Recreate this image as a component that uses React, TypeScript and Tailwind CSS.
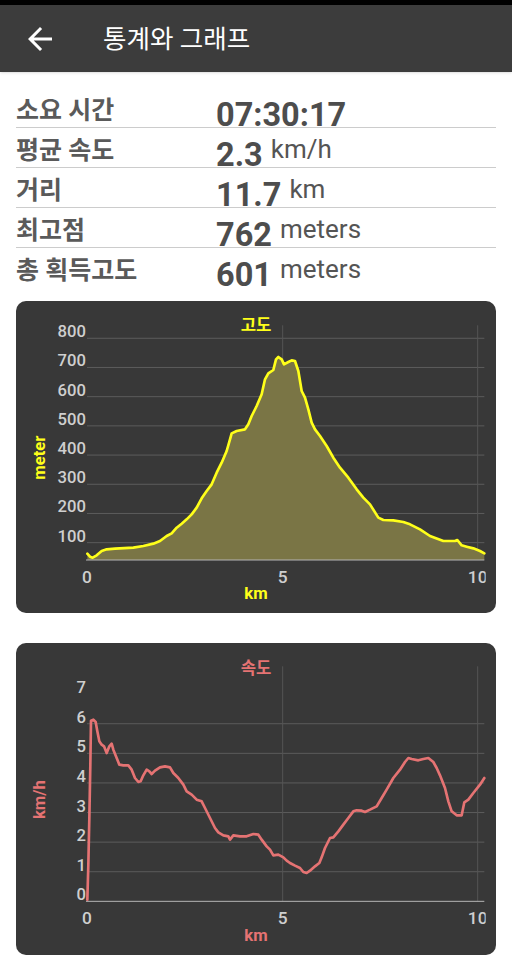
import React from 'react';

type Pt = [number, number];

type Stat = {
    label: string;
    value: string;
    unit?: string;
};

type Tick = {
    label: string;
    y: number;
    grid: boolean;
};

type ChartCfg = {
    id: string;
    title: string;
    yTitle: string;
    color: string;
    fill?: string;
    top: number;
    titleY: number;
    axisY: number;
    gridTop: number;
    xLabelY: number;
    kmY: number;
    yTitleY: number;
    ticks: Tick[];
    points: Pt[];
};

const stats: Stat[] = [
    { label: '소요 시간', value: '07:30:17' },
    { label: '평균 속도', value: '2.3', unit: 'km/h' },
    { label: '거리', value: '11.7', unit: 'km' },
    { label: '최고점', value: '762', unit: 'meters' },
    { label: '총 획득고도', value: '601', unit: 'meters' },
];

// chart coords are 1/3 px (viewBox is 3x the card size)
const elevation: Pt[] = [
    [262, 773], [270, 782], [278, 785], [290, 778], [305, 765], [320, 760], [345, 758], [400, 755],
    [430, 750], [460, 743], [480, 735], [500, 720], [515, 712], [530, 695], [545, 683], [560, 670],
    [575, 655], [590, 635], [605, 607], [620, 585], [635, 565], [650, 530], [665, 500], [680, 465],
    [690, 430], [695, 412], [710, 405], [735, 400], [745, 385], [755, 360], [770, 330], [785, 295],
    [795, 250], [805, 232], [820, 222], [828, 190], [835, 183], [845, 190], [852, 205], [865, 198],
    [875, 193], [885, 195], [895, 225], [905, 285], [915, 305], [925, 340], [935, 380], [945, 400],
    [960, 420], [980, 450], [1000, 485], [1020, 515], [1045, 545], [1070, 580], [1090, 605], [1110, 625],
    [1135, 665], [1150, 672], [1180, 673], [1210, 678], [1230, 685], [1260, 700], [1290, 720], [1330, 735],
    [1365, 735], [1372, 732], [1385, 748], [1400, 752], [1420, 757], [1440, 765], [1453, 772],
];

const speed: Pt[] = [
    [262, 805], [265, 700], [268, 560], [271, 400], [273, 268], [280, 265], [287, 272], [292, 300],
    [298, 330], [305, 340], [312, 345], [320, 365], [328, 345], [335, 337], [340, 355], [350, 380],
    [358, 400], [370, 402], [385, 402], [395, 415], [405, 440], [415, 452], [422, 450], [430, 432],
    [440, 415], [448, 420], [455, 428], [465, 418], [480, 408], [495, 405], [510, 408], [520, 425],
    [535, 440], [550, 460], [560, 480], [575, 490], [590, 505], [605, 510], [615, 530], [630, 560],
    [645, 590], [655, 603], [670, 612], [685, 615], [690, 625], [700, 612], [720, 615], [740, 615],
    [760, 608], [775, 610], [785, 625], [800, 645], [810, 655], [820, 672], [835, 670], [850, 678],
    [860, 688], [870, 695], [885, 703], [900, 710], [910, 722], [920, 725], [930, 718], [945, 705],
    [958, 695], [965, 678], [975, 650], [990, 620], [1000, 618], [1015, 600], [1030, 580], [1045, 560],
    [1060, 540], [1070, 537], [1085, 538], [1095, 542], [1110, 535], [1130, 525], [1145, 500], [1160, 475],
    [1180, 440], [1200, 415], [1215, 392], [1225, 380], [1235, 383], [1255, 387], [1270, 383], [1285, 380],
    [1300, 392], [1310, 410], [1320, 432], [1335, 470], [1345, 510], [1355, 540], [1370, 552], [1385, 552],
    [1393, 513], [1405, 505], [1420, 485], [1440, 460], [1453, 440],
];

const charts: ChartCfg[] = [
    {
        id: 'alt',
        title: '고도',
        yTitle: 'meter',
        color: '#ffff1a',
        fill: '#7a7545',
        top: 15,
        titleY: 105,
        axisY: 792,
        gridTop: 88,
        xLabelY: 862,
        kmY: 910,
        yTitleY: 485,
        ticks: ['100', '200', '300', '400', '500', '600', '700', '800'].map((label, i) => ({
            label,
            y: 740 - i * 87.6,
            grid: true,
        })),
        points: elevation,
    },
    {
        id: 'spd',
        title: '속도',
        yTitle: 'km/h',
        color: '#e57373',
        top: 35,
        titleY: 127,
        axisY: 810,
        gridTop: 105,
        xLabelY: 878,
        kmY: 930,
        yTitleY: 505,
        ticks: ['0', '1', '2', '3', '4', '5', '6', '7'].map((label, i) => ({
            label,
            y: 810 - i * 88.8,
            grid: i > 0 && i < 7,
        })),
        points: speed,
    },
];

const toPath = (pts: Pt[]) => pts.map(([x, y], i) => `${i ? 'L' : 'M'}${x} ${y}`).join(' ');

function Chart({ cfg }: { cfg: ChartCfg }) {
    const line = toPath(cfg.points);
    const last = cfg.points[cfg.points.length - 1];

    return (
        <div className="mx-4 h-[312px] rounded-[10px] bg-[#383838] overflow-hidden">
            <svg className="w-full h-full" viewBox={`48 ${cfg.top} 1440 936`}>
                <defs>
                    <clipPath id={`${cfg.id}-clip`}>
                        <rect x="0" y="0" width="1457" height="1000" />
                    </clipPath>
                </defs>

                {/* grid */}
                {cfg.ticks.filter(t => t.grid).map(t => (
                    <line key={t.label} x1="261" x2="1453" y1={t.y} y2={t.y} stroke="#5c5c5c" strokeWidth="3" />
                ))}
                {[848, 1433].map(x => (
                    <line key={x} x1={x} x2={x} y1={cfg.gridTop} y2={cfg.axisY} stroke="#555555" strokeWidth="3" />
                ))}

                {cfg.fill && (
                    <path d={`${line} L${last[0]} ${cfg.axisY} L262 ${cfg.axisY} Z`} fill={cfg.fill} />
                )}

                <line x1="258" x2="1453" y1={cfg.axisY} y2={cfg.axisY} stroke="#b5b5b5" strokeWidth="3" />

                <path d={line} fill="none" stroke={cfg.color} strokeWidth="8" strokeLinejoin="round" strokeLinecap="round" />

                {/* y labels */}
                {cfg.ticks.map(t => (
                    <text key={t.label} x="258" y={t.y - 3} textAnchor="end" fontSize="50" fontWeight="500" fill="#cfcfcf">
                        {t.label}
                    </text>
                ))}

                {/* x labels */}
                <g clipPath={`url(#${cfg.id}-clip)`} fontSize="52" fontWeight="500" fill="#cfcfcf" textAnchor="middle">
                    <text x="261" y={cfg.xLabelY}>0</text>
                    <text x="848" y={cfg.xLabelY}>5</text>
                    <text x="1433" y={cfg.xLabelY}>10</text>
                </g>

                <text x="768" y={cfg.titleY} textAnchor="middle" fontSize="50" fontWeight="700" fill={cfg.color}>
                    {cfg.title}
                </text>
                <text x="768" y={cfg.kmY} textAnchor="middle" fontSize="50" fontWeight="700" fill={cfg.color}>
                    km
                </text>
                <text
                    x="134"
                    y={cfg.yTitleY}
                    textAnchor="middle"
                    fontSize="50"
                    fontWeight="700"
                    fill={cfg.color}
                    transform={`rotate(-90 134 ${cfg.yTitleY})`}
                >
                    {cfg.yTitle}
                </text>
            </svg>
        </div>
    );
}

function App() {
    return (
        <div className="w-[512px] h-[960px] bg-white overflow-hidden font-['Roboto','Noto_Sans_CJK_KR',sans-serif]">
            <div className="h-[5px] bg-black"></div>
            <div className="h-[67px] bg-[#3c3c3c] flex items-center shadow-sm">
                <svg className="w-9 h-9 ml-[22px]" viewBox="0 0 24 24" fill="#ffffff">
                    <path d="M20 11H7.83l5.59-5.59L12 4l-8 8 8 8 1.41-1.41L7.83 13H20v-2z" />
                </svg>
                <h1 className="ml-[45px] mt-[2px] text-[25.5px] text-white leading-none">통계와 그래프</h1>
            </div>

            <div className="px-4 pt-4">
                {stats.map((s, i) => (
                    <div
                        key={s.label}
                        className={`flex h-10 ${i < stats.length - 1 ? 'border-b border-[#cccccc]' : ''}`}
                    >
                        <span className="w-[200px] pt-[10px] text-[25px] font-bold leading-none text-[#5a5a5a]">
                            {s.label}
                        </span>
                        <span className="pt-[11px] text-[32.5px] font-bold leading-none text-[#4d4d4d]">{s.value}</span>
                        {s.unit && (
                            <span className="ml-2 pt-[8px] text-[26px] leading-none text-[#555555]">{s.unit}</span>
                        )}
                    </div>
                ))}
            </div>

            <div className="mt-[13px]">
                <Chart cfg={charts[0]} />
            </div>
            <div className="mt-[30px]">
                <Chart cfg={charts[1]} />
            </div>
        </div>
    );
}

export default App;
